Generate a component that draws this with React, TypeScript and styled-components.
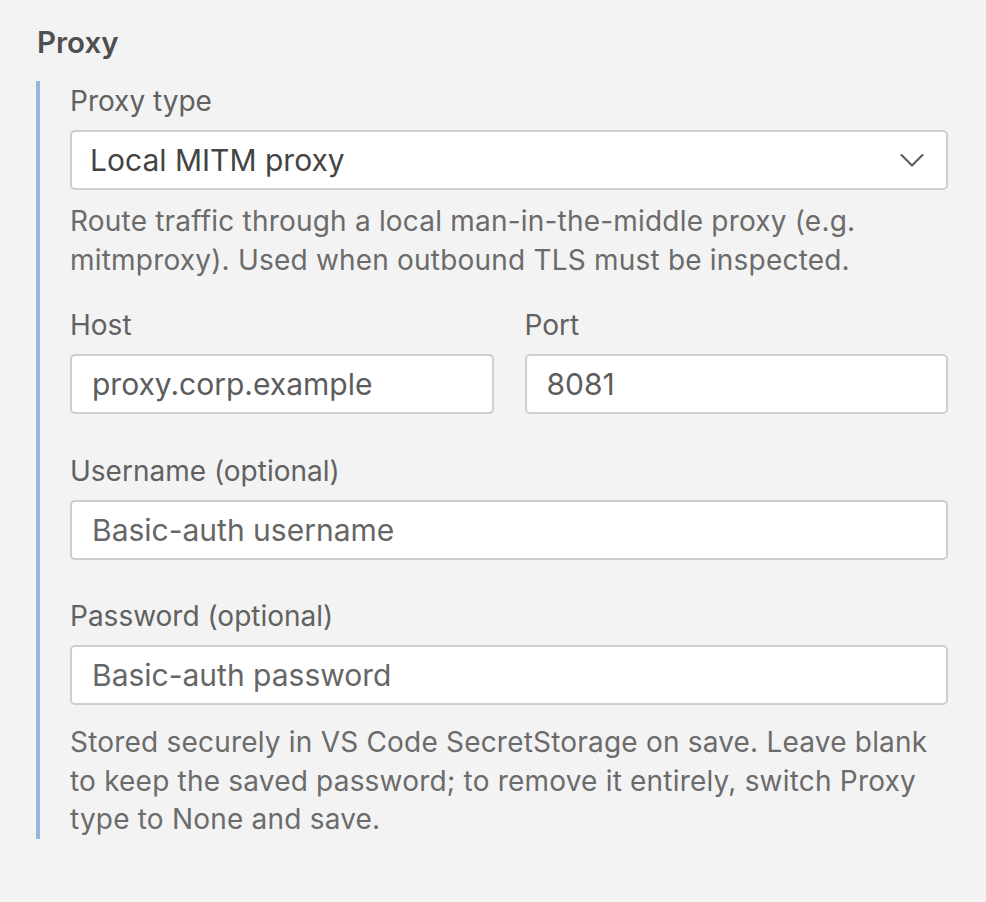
import React from "react";
import styled, { createGlobalStyle } from "styled-components";

const GlobalStyle = createGlobalStyle`
  html, body {
    margin: 0;
    padding: 0;
    background: #f3f3f3;
  }
  body {
    font-family: Inter, "Noto Sans", "Liberation Sans", sans-serif;
    -webkit-font-smoothing: antialiased;
  }
`;

export const Page = styled.div`
  padding: 22px 38px 60px 36px;
`;

export const SectionTitle = styled.h2`
  margin: 0 0 19px 1px;
  font-size: 29.5px;
  line-height: 40px;
  font-weight: 600;
  color: #4f4f4f;
`;

export const Fields = styled.div`
  display: flex;
  flex-direction: column;
  border-left: 4px solid #98b5e0;
  padding: 1px 0 0 30px;
`;

export const Field = styled.div<{ $top?: number }>`
  display: flex;
  flex-direction: column;
  min-width: 0;
  margin-top: ${(p) => p.$top ?? 0}px;
`;

export const Row = styled.div<{ $top?: number }>`
  display: grid;
  grid-template-columns: 1fr 1fr;
  gap: 31px;
  margin-top: ${(p) => p.$top ?? 0}px;
`;

export const Label = styled.label`
  font-size: 28px;
  line-height: 38px;
  color: #616161;
  margin-bottom: 10px;
`;

export const Input = styled.input`
  box-sizing: border-box;
  width: 100%;
  height: 60px;
  padding: 0 20px;
  border: 2px solid #cecece;
  border-radius: 5px;
  background: #fff;
  font-family: inherit;
  font-size: 30px;
  color: #5c5c5c;
  outline: none;

  &::placeholder {
    color: #666;
    opacity: 1;
  }
`;

export const SelectBox = styled.div`
  box-sizing: border-box;
  height: 60px;
  display: flex;
  align-items: center;
  justify-content: space-between;
  padding: 0 22px 0 18px;
  border: 2px solid #cecece;
  border-radius: 5px;
  background: #fff;
  font-size: 30px;
  color: #444;
`;

export const Help = styled.p<{ $gap?: number }>`
  margin: ${(p) => p.$gap ?? 12}px 0 0;
  font-size: 28px;
  line-height: 38.5px;
  letter-spacing: 0.2px;
  color: #6b6b6b;
`;

const Chevron = () => (
  <svg width="24" height="14" viewBox="0 0 24 14" fill="none">
    <path d="M1.5 2l10.5 10.5L22.5 2" stroke="#555" strokeWidth="2" strokeLinecap="round" strokeLinejoin="round" />
  </svg>
);

export default function App() {
  return (
    <>
      <GlobalStyle />
      <Page>
        <SectionTitle>Proxy</SectionTitle>
        <Fields>
          <Field>
            <Label>Proxy type</Label>
            <SelectBox>
              <span>Local MITM proxy</span>
              <Chevron />
            </SelectBox>
            <Help>
              Route traffic through a local man-in-the-middle proxy (e.g.
              <br />
              mitmproxy). Used when outbound TLS must be inspected.
            </Help>
          </Field>
          <Row $top={27}>
            <Field>
              <Label>Host</Label>
              <Input defaultValue="proxy.corp.example" />
            </Field>
            <Field>
              <Label>Port</Label>
              <Input defaultValue="8081" />
            </Field>
          </Row>
          <Field $top={38}>
            <Label>Username (optional)</Label>
            <Input placeholder="Basic-auth username" />
          </Field>
          <Field $top={37}>
            <Label>Password (optional)</Label>
            <Input type="password" placeholder="Basic-auth password" />
            <Help $gap={18}>
              Stored securely in VS Code SecretStorage on save. Leave blank
              <br />
              to keep the saved password; to remove it entirely, switch Proxy
              <br />
              type to None and save.
            </Help>
          </Field>
        </Fields>
      </Page>
    </>
  );
}
